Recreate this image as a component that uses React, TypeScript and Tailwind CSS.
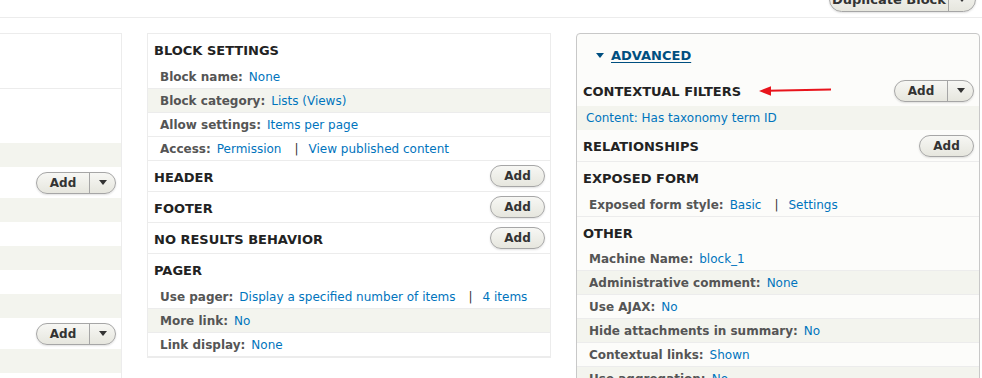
import { type ReactNode } from "react";

function Caret({ className = "" }: { className?: string }) {
  return (
    <svg width="8" height="5" viewBox="0 0 8 5" className={className}>
      <path d="M0 0h8L4 5z" fill="currentColor" />
    </svg>
  );
}

const btnBase =
  "h-[22px] rounded-full border border-[#a6a6a6] bg-linear-to-b from-[#f7f7f4] to-[#e6e6de] text-[12px] font-bold text-[#333] shadow-[0_1px_2px_rgba(0,0,0,0.12)]";

function AddButton() {
  return <button className={`${btnBase} w-[55px]`}>Add</button>;
}

function AddDropButton() {
  return (
    <div className={`${btnBase} flex w-[80px] overflow-hidden`}>
      <span className="flex w-[53px] items-center justify-center border-r border-[#a6a6a6]">Add</span>
      <span className="flex flex-1 items-center justify-center">
        <Caret className="text-[#333]" />
      </span>
    </div>
  );
}

function Title({
  children,
  action,
  h = "h-[31px]",
  border = false,
}: {
  children: ReactNode;
  action?: ReactNode;
  h?: string;
  border?: boolean;
}) {
  return (
    <div
      className={`flex ${h} items-center justify-between pl-[6px] pr-[5px] ${border ? "border-b border-[#ececec]" : ""}`}
    >
      <h3 className="pt-[3px] text-[13px] font-bold uppercase text-[#222]">{children}</h3>
      {action}
    </div>
  );
}

function Row({ label, children, gray }: { label?: string; children: ReactNode; gray?: boolean }) {
  return (
    <div
      className={`flex h-[24px] items-center border-b border-[#ececec] pl-[12px] text-[12px] whitespace-nowrap ${gray ? "bg-[#f3f4ee]" : ""}`}
    >
      {label && <span className="mr-[6px] font-bold text-[#555]">{label}</span>}
      {children}
    </div>
  );
}

function A({ children }: { children: ReactNode }) {
  return <span className="text-[#0074bd]">{children}</span>;
}

function Sep() {
  return <span className="ml-[13px] mr-[10px] text-[#333]">|</span>;
}

function LeftColumn() {
  return (
    <div className="w-[122px] shrink-0 border-t border-r border-[#ececec]">
      <div className="h-[55px] border-b border-[#ececec]" />
      <div className="h-[54px]" />
      <div className="h-[24px] bg-[#f3f4ee]" />
      <div className="flex h-[31px] items-center justify-end pr-[5px]">
        <AddDropButton />
      </div>
      <div className="h-[24px] bg-[#f3f4ee]" />
      <div className="h-[24px]" />
      <div className="h-[24px] bg-[#f3f4ee]" />
      <div className="h-[24px]" />
      <div className="h-[24px] bg-[#f3f4ee]" />
      <div className="flex h-[31px] items-center justify-end pr-[5px]">
        <AddDropButton />
      </div>
      <div className="h-[24px] bg-[#f3f4ee]" />
      <div className="h-[40px]" />
    </div>
  );
}

function MiddleColumn() {
  return (
    <div className="w-[404px] shrink-0 self-start border border-[#ececec]">
      <Title>Block settings</Title>
      <Row label="Block name:">
        <A>None</A>
      </Row>
      <Row label="Block category:" gray>
        <A>Lists (Views)</A>
      </Row>
      <Row label="Allow settings:">
        <A>Items per page</A>
      </Row>
      <Row label="Access:">
        <A>Permission</A>
        <Sep />
        <A>View published content</A>
      </Row>
      <Title border action={<AddButton />}>Header</Title>
      <Title border action={<AddButton />}>Footer</Title>
      <Title border action={<AddButton />}>No results behavior</Title>
      <Title>Pager</Title>
      <Row label="Use pager:">
        <A>Display a specified number of items</A>
        <Sep />
        <A>4 items</A>
      </Row>
      <Row label="More link:" gray>
        <A>No</A>
      </Row>
      <Row label="Link display:">
        <A>None</A>
      </Row>
    </div>
  );
}

function RightColumn() {
  return (
    <div className="relative h-[400px] w-[404px] shrink-0 rounded-[4px] border border-[#c8c8c8] bg-[#fcfcfa]">
      <div className="flex h-[41px] items-center gap-[7px] pl-[19px] pt-[2px]">
        <Caret className="text-[#004f80]" />
        <span className="text-[13px] font-bold text-[#004f80] underline underline-offset-2">ADVANCED</span>
      </div>
      <Title action={<AddDropButton />}>Contextual filters</Title>
      <div className="flex h-[24px] items-center bg-[#f3f4ee] pl-[9px] text-[12px]">
        <A>Content: Has taxonomy term ID</A>
      </div>
      <Title border h="h-[32px]" action={<AddButton />}>
        Relationships
      </Title>
      <Title>Exposed form</Title>
      <Row label="Exposed form style:">
        <A>Basic</A>
        <Sep />
        <A>Settings</A>
      </Row>
      <Title h="h-[30px]">Other</Title>
      <Row label="Machine Name:">
        <A>block_1</A>
      </Row>
      <Row label="Administrative comment:" gray>
        <A>None</A>
      </Row>
      <Row label="Use AJAX:">
        <A>No</A>
      </Row>
      <Row label="Hide attachments in summary:" gray>
        <A>No</A>
      </Row>
      <Row label="Contextual links:">
        <A>Shown</A>
      </Row>
      <Row label="Use aggregation:" gray>
        <A>No</A>
      </Row>
      <svg
        className="absolute left-[179px] top-[49px]"
        width="80"
        height="16"
        viewBox="0 0 80 16"
      >
        <line x1="12" y1="7.8" x2="75" y2="6.6" stroke="#e8141c" strokeWidth="2" />
        <path d="M3 8L15 3.2L15 12.8Z" fill="#e8141c" />
      </svg>
    </div>
  );
}

export default function App() {
  return (
    <div className="h-[378px] w-[982px] overflow-hidden bg-white font-['DejaVu_Sans',sans-serif]">
      <div className="flex h-[18px] justify-end overflow-hidden border-b border-[#ececec] pr-[6px]">
        <div className={`${btnBase} -mt-[13px] flex h-[25px] w-[147px] shrink-0 overflow-hidden text-[13px]`}>
          <span className="flex w-[119px] items-center justify-center border-r border-[#a6a6a6]">
            Duplicate Block
          </span>
          <span className="flex flex-1 items-center justify-center">
            <Caret className="text-[#333]" />
          </span>
        </div>
      </div>
      <div className="flex gap-[25px] pt-[15px]">
        <LeftColumn />
        <MiddleColumn />
        <RightColumn />
      </div>
    </div>
  );
}
